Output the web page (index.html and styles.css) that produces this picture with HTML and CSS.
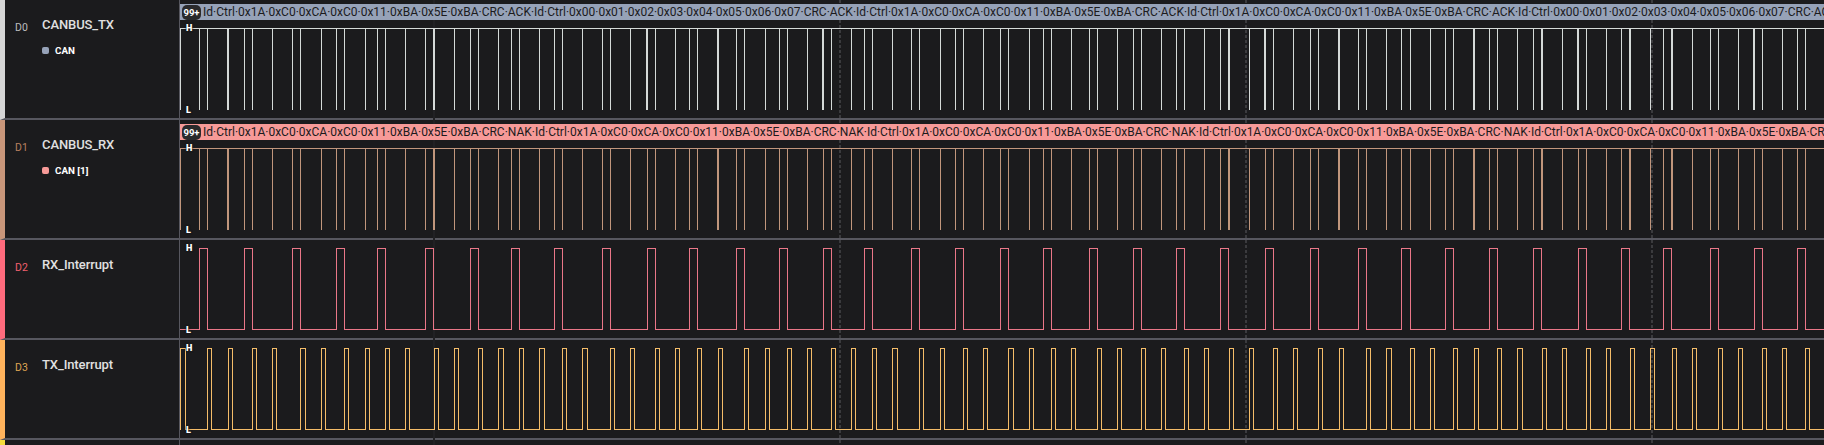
FILE: index.html
```html
<!DOCTYPE html>
<html lang="en">
<head>
<meta charset="utf-8">
<title>Logic Analyzer</title>
<link rel="stylesheet" href="styles.css">
</head>
<body>
<main class="analyzer">
  <svg class="grid"><path class="faint" d="M254 0V445"/><path d="M660 0V445M1066 0V445M1472 0V445"/></svg>
  <section class="channel channel--tall d0">
    <div class="label"><span class="index">D0</span><div class="names"><h2 class="name">CANBUS_TX</h2><p class="decoder"><i class="chip"></i>CAN</p></div></div>
    <div class="plot"><div class="frames"><b class="count">99+</b><span class="bytes">Id·Ctrl·0x1A·0xC0·0xCA·0xC0·0x11·0xBA·0x5E·0xBA·CRC·ACK·Id·Ctrl·0x00·0x01·0x02·0x03·0x04·0x05·0x06·0x07·CRC·ACK·Id·Ctrl·0x1A·0xC0·0xCA·0xC0·0x11·0xBA·0x5E·0xBA·CRC·ACK·Id·Ctrl·0x1A·0xC0·0xCA·0xC0·0x11·0xBA·0x5E·0xBA·CRC·ACK·Id·Ctrl·0x00·0x01·0x02·0x03·0x04·0x05·0x06·0x07·CRC·ACK</span></div><svg class="wave" data-wave="tx"></svg><b class="level high">H</b><b class="level low">L</b></div>
  </section>
  <section class="channel channel--tall d1">
    <div class="label"><span class="index">D1</span><div class="names"><h2 class="name">CANBUS_RX</h2><p class="decoder"><i class="chip"></i>CAN [1]</p></div></div>
    <div class="plot"><div class="frames"><b class="count">99+</b><span class="bytes">Id·Ctrl·0x1A·0xC0·0xCA·0xC0·0x11·0xBA·0x5E·0xBA·CRC·NAK·Id·Ctrl·0x1A·0xC0·0xCA·0xC0·0x11·0xBA·0x5E·0xBA·CRC·NAK·Id·Ctrl·0x1A·0xC0·0xCA·0xC0·0x11·0xBA·0x5E·0xBA·CRC·NAK·Id·Ctrl·0x1A·0xC0·0xCA·0xC0·0x11·0xBA·0x5E·0xBA·CRC·NAK·Id·Ctrl·0x1A·0xC0·0xCA·0xC0·0x11·0xBA·0x5E·0xBA·CRC·NAK</span></div><svg class="wave" data-wave="rx"></svg><b class="level high">H</b><b class="level low">L</b></div>
  </section>
  <section class="channel d2">
    <div class="label"><span class="index">D2</span><div class="names"><h2 class="name">RX_Interrupt</h2></div></div>
    <div class="plot"><svg class="wave" data-wave="rxint"></svg><b class="level high">H</b><b class="level low">L</b></div>
  </section>
  <section class="channel d3">
    <div class="label"><span class="index">D3</span><div class="names"><h2 class="name">TX_Interrupt</h2></div></div>
    <div class="plot"><svg class="wave" data-wave="txint"></svg><b class="level high">H</b><b class="level low">L</b></div>
  </section>
  <section class="channel d4"><div class="label"></div><div class="plot"></div></section>
</main>
<script src="waves.js"></script>
</body>
</html>
```
FILE: styles.css
```css
* { box-sizing: border-box; }
body { margin: 0; background: #1b1b1d; color: #e0e0e0; font-family: Roboto, "Liberation Sans", sans-serif; overflow: hidden; }
.analyzer { position: relative; height: 445px; overflow: hidden; display: flex; flex-direction: column; }
.channel { flex: none; display: flex; height: 100px; border-left: 5px solid var(--color); border-bottom: 2px solid #57575f; }
.channel--tall { height: 120px; }
.d0 { --color: #d6d6d6; --index: #bdbdbd; --bar: #96a2b8; --trace: #d5dad8; }
.d1 { --color: #c8967a; --index: #b9805f; --bar: #f79a98; --trace: #c1967c; }
.d2 { --color: #ff6b7d; --index: #f0606d; --trace: #ea7788; }
.d3 { --color: #ffb35c; --index: #dfa553; --trace: #f5bd69; }
.d4 { --color: #f5dc3c; }
.label { flex: none; width: 175px; display: flex; border-right: 1px solid #57575f; padding: 17px 0 0 10px; }
.index { width: 27px; padding-top: 5px; font-size: 10.5px; line-height: 12px; color: var(--index); letter-spacing: .2px; }
.name { margin: 0; font-size: 13px; line-height: 15px; font-weight: 500; letter-spacing: -.1px; }
.decoder { display: flex; align-items: center; gap: 6px; margin: 12px 0 0; font-size: 9.8px; line-height: 13px; font-weight: 700; color: #fff; }
.chip { width: 7px; height: 7px; border-radius: 2px; background: var(--bar); }
.plot { position: relative; flex: 1; min-width: 0; display: flex; flex-direction: column; }
.frames { flex: none; margin-top: 4px; height: 16px; display: flex; align-items: center; gap: 2px; padding-left: 2px; overflow: hidden; background: var(--bar); color: #1b1b1d; }
.count { flex: none; width: 19px; height: 15px; margin-top: 1px; border-radius: 5px; background: #2a2a2c; color: #fff; font-size: 9.5px; line-height: 16px; text-align: center; }
.bytes { font-size: 12px; line-height: 16px; white-space: nowrap; }
.wave { flex: 1; width: 100%; min-height: 0; fill: none; stroke: var(--trace); shape-rendering: crispEdges; }
.level { position: absolute; left: 6px; font-size: 9px; line-height: 8px; font-weight: 900; color: #fff; text-shadow: 0 0 2px #1b1b1d, 0 0 2px #1b1b1d; }
.high { top: 4px; }
.low { top: 86px; }
.channel--tall .high { top: 24px; }
.channel--tall .low { top: 106px; }
.grid { position: absolute; left: 180px; top: 0; width: 1644px; height: 445px; fill: none; stroke: #3b3b3e; stroke-width: 2; stroke-dasharray: 3 2; pointer-events: none; }
.faint { stroke: #212124; stroke-dasharray: none; }
```
FILE: waves.js
```js
// Left edge of the plot area in page coordinates.
const ORIGIN = 180;

const narrow = [180,199,207,244,252,272,292,300,321,336,344,365,377,385,405,425,454,470,478,498,511,519,539,554,562,582,602,610,630,655,675,689,697,736,744,765,779,787,807,831,851,864,872,892,911,919,940,955,963,983,1000,1008,1029,1043,1051,1071,1089,1097,1117,1133,1141,1161,1176,1184,1204,1220,1249,1273,1293,1310,1318,1358,1366,1386,1401,1410,1430,1445,1453,1489,1497,1517,1533,1562,1586,1606,1621,1650,1663,1692,1710,1718,1738,1762,1782,1797,1805];
const wide = [227,433,717,1228,1338,1473,1541,1629,1671];
const txWide = [646,822,1264,1577,1753];

const rxRise = [199,244,292,336,377,425,470,511,554,602,647,689,736,779,823,864,911,955,1000,1043,1089,1133,1176,1220,1265,1310,1358,1401,1445,1489,1533,1578,1621,1663,1710,1754,1797];
const txRise = [180,207,228,252,272,300,321,344,365,385,405,434,454,478,498,519,539,562,582,610,630,655,675,697,718,744,765,787,807,831,851,872,892,919,940,963,983,1008,1029,1051,1071,1097,1117,1141,1161,1184,1204,1229,1249,1273,1293,1318,1339,1366,1386,1410,1430,1453,1474,1497,1517,1542,1562,1586,1606,1630,1650,1672,1692,1718,1738,1762,1782,1805];
const txLong = new Set([180,300,498,539,582,892,1008,1386,1517]);

const at = x => x - ORIGIN + 0.5;

// Bursts that drop from the high level and return within a pixel or two.
function drops(columns) {
  return 'M0 8.5H1644' + columns.map(x => `M${at(x)} 8V90`).join('');
}

// Square pulses rising from the low level.
function pulses(rises, width) {
  return 'M0 89.5' + rises.map(x => `H${at(x)}V8.5H${at(x + width(x))}V89.5`).join('') + 'H1644';
}

const both = list => list.flatMap(x => [x, x + 1]);
const paths = {
  tx: drops([...narrow, ...both(wide), ...both(txWide)]),
  rx: drops([...narrow, ...both(wide), ...txWide.map(x => x + 1)]),
  rxint: pulses(rxRise, x => (x === 1401 ? 9 : 8)),
  txint: pulses(txRise, x => (txLong.has(x) ? 5 : 4))
};

document.querySelectorAll('[data-wave]').forEach(svg => {
  const path = document.createElementNS('http://www.w3.org/2000/svg', 'path');
  path.setAttribute('d', paths[svg.dataset.wave]);
  svg.append(path);
});
```
